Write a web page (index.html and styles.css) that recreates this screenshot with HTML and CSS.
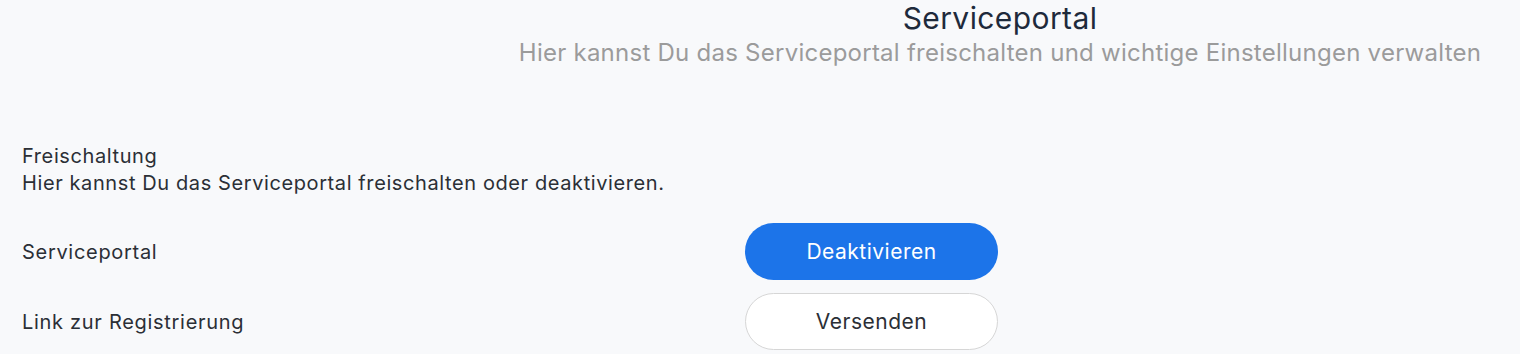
FILE: index.html
```html
<!DOCTYPE html>
<html lang="de">
<head>
<meta charset="utf-8">
<title>Serviceportal</title>
<link rel="stylesheet" href="styles.css">
</head>
<body>
<div class="page">
  <header class="page-header">
    <h1 class="page-title">Serviceportal</h1>
    <p class="page-subtitle">Hier kannst Du das Serviceportal freischalten und wichtige Einstellungen verwalten</p>
  </header>
  <section class="section">
    <div class="section-head">
      <div class="section-title">Freischaltung</div>
      <div class="section-desc">Hier kannst Du das Serviceportal freischalten oder deaktivieren.</div>
    </div>
    <div class="row">
      <div class="row-label">Serviceportal</div>
      <button class="btn btn-primary">Deaktivieren</button>
    </div>
    <div class="row">
      <div class="row-label">Link zur Registrierung</div>
      <button class="btn btn-outline">Versenden</button>
    </div>
  </section>
</div>
</body>
</html>
```

FILE: styles.css
```css
* { box-sizing: border-box; }
html, body {
  margin: 0;
  padding: 0;
  background: #f8f9fb;
  font-family: Inter, "Noto Sans", sans-serif;
  color: #2b2b2b;
}
.page {
  width: 1520px;
  height: 354px;
  overflow: hidden;
}
.page-header {
  margin-left: 480px;
  display: flex;
  flex-direction: column;
  align-items: center;
}
.page-title {
  margin: 0;
  font-size: 30px;
  font-weight: 400;
  letter-spacing: 0.4px;
  line-height: 36px;
  color: #1e2a3b;
}
.page-subtitle {
  margin: 2px 0 0;
  font-size: 24px;
  letter-spacing: 0.25px;
  line-height: 30px;
  color: #9b9b9b;
}
.section {
  padding: 75px 22px 0;
}
.section-head {
  font-size: 20px;
  letter-spacing: 0.6px;
  line-height: 27px;
  color: #2b2f36;
}
.row {
  display: flex;
  align-items: center;
  margin-top: 13px;
}
.section-head + .row { margin-top: 26px; }
.row-label {
  width: 723px;
  font-size: 20px;
  letter-spacing: 0.7px;
  color: #2b2f36;
}
.btn {
  width: 253px;
  height: 57px;
  border-radius: 29px;
  font-family: Inter, "Noto Sans", sans-serif;
  font-size: 21px;
  letter-spacing: 0.5px;
  cursor: pointer;
}
.btn-primary {
  background: #1c74e9;
  border: none;
  color: #ffffff;
}
.btn-outline {
  background: #ffffff;
  border: 1.5px solid #d6d6d6;
  color: #2b2f36;
}
```
